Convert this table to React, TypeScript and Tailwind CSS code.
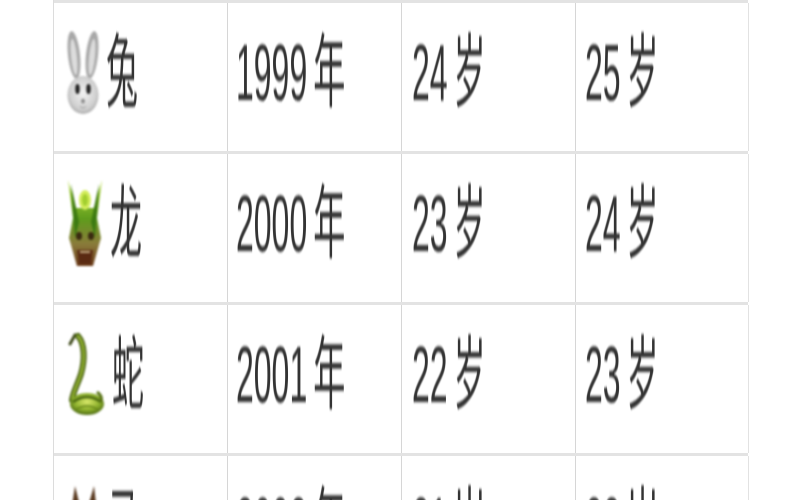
import React from "react";

const font = { fontFamily: '"Liberation Sans", "Noto Sans CJK SC", sans-serif' };

function Txt({ children }: { children: React.ReactNode }) {
  return (
    <span className="inline-block origin-center scale-y-[2.5] text-[32px] leading-none text-[#333333] blur-[0.6px] whitespace-nowrap">
      {children}
    </span>
  );
}

function NumTxt({ num, unit }: { num: string; unit: string }) {
  return (
    <span className="inline-block origin-center scale-y-[2.5] text-[32px] leading-none text-[#333333] blur-[0.6px] whitespace-nowrap">
      {num}
      <span className="ml-[6px]">{unit}</span>
    </span>
  );
}

function Rabbit() {
  return (
    <svg width="32" height="86" viewBox="0 0 32 86" className="blur-[0.8px] shrink-0">
      <defs>
        <radialGradient id="rf" cx="50%" cy="45%" r="60%">
          <stop offset="0%" stopColor="#f2f2f2" />
          <stop offset="70%" stopColor="#d0d0d0" />
          <stop offset="100%" stopColor="#a3a3a3" />
        </radialGradient>
      </defs>
      <ellipse cx="7" cy="26" rx="6" ry="24" fill="#a8a8a8" transform="rotate(-6 7 26)" />
      <ellipse cx="7" cy="28" rx="3" ry="18" fill="#dcdcdc" transform="rotate(-6 7 28)" />
      <ellipse cx="25" cy="26" rx="6" ry="24" fill="#a8a8a8" transform="rotate(6 25 26)" />
      <ellipse cx="25" cy="28" rx="3" ry="18" fill="#dcdcdc" transform="rotate(6 25 28)" />
      <ellipse cx="16" cy="66" rx="15.5" ry="19" fill="url(#rf)" />
      <ellipse cx="10.5" cy="60" rx="2.2" ry="5" fill="#1f1f1f" />
      <ellipse cx="21.5" cy="60" rx="2.2" ry="5" fill="#1f1f1f" />
      <ellipse cx="16" cy="72" rx="1.8" ry="2.6" fill="#8a8a8a" />
      <path d="M13 77 Q16 81 19 77" stroke="#9a9a9a" strokeWidth="1" fill="none" />
    </svg>
  );
}

function Dragon() {
  return (
    <svg width="36" height="90" viewBox="0 0 36 90" className="blur-[1px] shrink-0">
      <defs>
        <linearGradient id="dg" x1="0" y1="0" x2="0" y2="1">
          <stop offset="0%" stopColor="#b6dd3c" />
          <stop offset="45%" stopColor="#5f9c1c" />
          <stop offset="75%" stopColor="#8a7a3a" />
          <stop offset="100%" stopColor="#6a3a18" />
        </linearGradient>
      </defs>
      <path d="M1 2 L9 30 L27 30 L35 2 L30 40 L34 60 L26 88 L10 88 L2 60 L6 40 Z" fill="url(#dg)" />
      <path d="M4 6 L12 44 L8 60 Z" fill="#3d7a12" />
      <path d="M32 6 L24 44 L28 60 Z" fill="#3d7a12" />
      <ellipse cx="18" cy="22" rx="6" ry="10" fill="#d2ec5a" />
      <ellipse cx="18" cy="22" rx="3" ry="6" fill="#a3cf30" />
      <ellipse cx="12" cy="58" rx="3" ry="4" fill="#3a2a10" />
      <ellipse cx="24" cy="58" rx="3" ry="4" fill="#3a2a10" />
      <path d="M10 72 L26 72 L24 86 L12 86 Z" fill="#5a2a12" />
      <path d="M13 74 L23 74" stroke="#e0d0a0" strokeWidth="1.5" />
    </svg>
  );
}

function Snake() {
  return (
    <svg width="38" height="88" viewBox="0 0 38 88" className="blur-[0.9px] shrink-0">
      <defs>
        <radialGradient id="sg" cx="50%" cy="40%" r="60%">
          <stop offset="0%" stopColor="#d8e86a" />
          <stop offset="60%" stopColor="#8fb22e" />
          <stop offset="100%" stopColor="#4c6a12" />
        </radialGradient>
      </defs>
      <path d="M3 14 L8 5 L12 6" stroke="#3e4a1a" strokeWidth="3" fill="none" strokeLinecap="round" />
      <path d="M11 6 C 18 14, 18 30, 14 44 C 10 56, 6 62, 5 70" stroke="#4f6814" strokeWidth="6" fill="none" strokeLinecap="round" />
      <path d="M11 6 C 18 14, 18 30, 14 44 C 10 56, 6 62, 5 70" stroke="#9cbc38" strokeWidth="2" fill="none" strokeLinecap="round" />
      <ellipse cx="20" cy="74" rx="17" ry="11" fill="url(#sg)" />
      <path d="M6 72 Q20 62 34 72" stroke="#4c6a12" strokeWidth="2.5" fill="none" />
      <path d="M8 80 Q20 72 32 80" stroke="#6a8a1a" strokeWidth="1.5" fill="none" />
      <path d="M30 62 Q36 66 34 72" stroke="#5a7418" strokeWidth="3" fill="none" />
    </svg>
  );
}

function Horse() {
  return (
    <svg width="34" height="86" viewBox="0 0 34 86" className="blur-[0.9px] shrink-0">
      <path d="M4 30 L8 4 L14 28 Z" fill="#5a3a20" />
      <path d="M20 28 L27 4 L30 30 Z" fill="#5a3a20" />
      <ellipse cx="17" cy="56" rx="15" ry="28" fill="#9a6a3a" />
    </svg>
  );
}

type Row = { icon: React.ReactNode; animal: string; year: string; a: string; b: string };

const rows: Row[] = [
  { icon: <Rabbit />, animal: "兔", year: "1999", a: "24", b: "25" },
  { icon: <Dragon />, animal: "龙", year: "2000", a: "23", b: "24" },
  { icon: <Snake />, animal: "蛇", year: "2001", a: "22", b: "23" },
  { icon: <Horse />, animal: "马", year: "2002", a: "21", b: "22" },
];

const cell = "flex items-center border-r border-[#d6d6d6] pb-[10px]";

export default function App() {
  return (
    <div className="w-[800px] h-[500px] overflow-hidden bg-white" style={font}>
      <div className="ml-[53px] w-[695px] border-l border-[#dcdcdc]">
        <div className="grid grid-cols-[174px_174px_174px_173px] h-[2px] border-b-[3px] border-[#e3e3e3]">
          <div className="border-r border-[#d6d6d6]" />
          <div className="border-r border-[#d6d6d6]" />
          <div className="border-r border-[#d6d6d6]" />
          <div className="border-r border-[#e2e2e2]" />
        </div>
        {rows.map((r, i) => (
          <div
            key={i}
            className="grid grid-cols-[174px_174px_174px_173px] h-[151px] border-b-[3px] border-[#e3e3e3]"
          >
            <div className={`${cell} pl-[13px] gap-[7px]`}>
              {r.icon}
              <Txt>{r.animal}</Txt>
            </div>
            <div className={`${cell} pl-[8px]`}>
              <NumTxt num={r.year} unit="年" />
            </div>
            <div className={`${cell} pl-[10px]`}>
              <NumTxt num={r.a} unit="岁" />
            </div>
            <div className="flex items-center border-r border-[#e2e2e2] pb-[10px] pl-[9px]">
              <NumTxt num={r.b} unit="岁" />
            </div>
          </div>
        ))}
      </div>
    </div>
  );
}
